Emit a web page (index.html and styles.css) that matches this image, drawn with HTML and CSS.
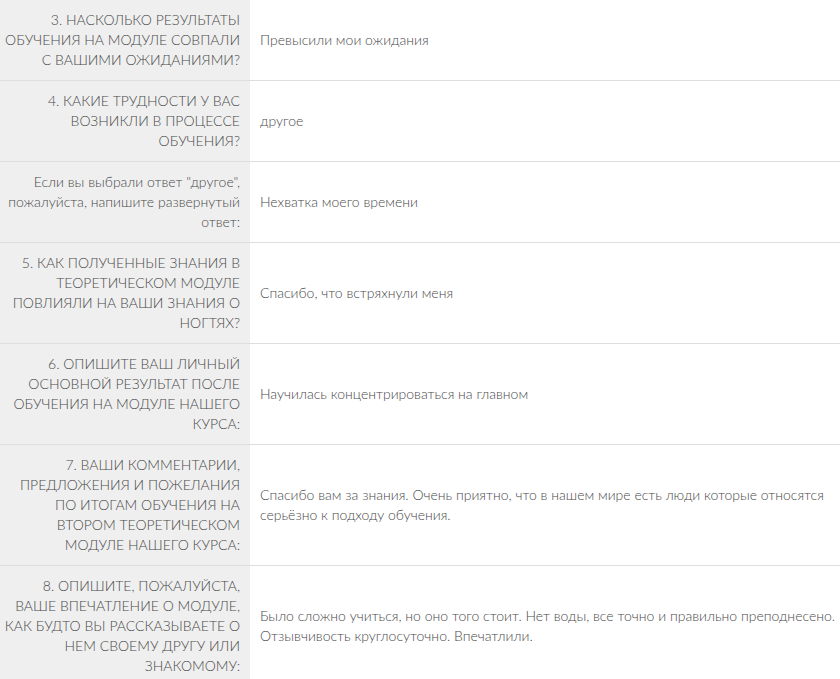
FILE: index.html
```html
<!DOCTYPE html>
<html lang="ru">
<head>
    <meta charset="UTF-8">
    <meta name="viewport" content="width=device-width, initial-scale=1.0">
    <title>Ответы анкеты</title>
    <link rel="stylesheet" href="styles.css">
</head>
<body>
    <div class="answers">
        <div class="answer-row">
            <div class="question">3. НАСКОЛЬКО РЕЗУЛЬТАТЫ<br>ОБУЧЕНИЯ НА МОДУЛЕ СОВПАЛИ<br>С ВАШИМИ ОЖИДАНИЯМИ?</div>
            <div class="reply">Превысили мои ожидания</div>
        </div>
        <div class="answer-row">
            <div class="question">4. КАКИЕ ТРУДНОСТИ У ВАС<br>ВОЗНИКЛИ В ПРОЦЕССЕ<br>ОБУЧЕНИЯ?</div>
            <div class="reply">другое</div>
        </div>
        <div class="answer-row">
            <div class="question">Если вы выбрали ответ "другое",<br>пожалуйста, напишите развернутый<br>ответ:</div>
            <div class="reply">Нехватка моего времени</div>
        </div>
        <div class="answer-row">
            <div class="question">5. КАК ПОЛУЧЕННЫЕ ЗНАНИЯ В<br>ТЕОРЕТИЧЕСКОМ МОДУЛЕ<br>ПОВЛИЯЛИ НА ВАШИ ЗНАНИЯ О<br>НОГТЯХ?</div>
            <div class="reply">Спасибо, что встряхнули меня</div>
        </div>
        <div class="answer-row">
            <div class="question">6. ОПИШИТЕ ВАШ ЛИЧНЫЙ<br>ОСНОВНОЙ РЕЗУЛЬТАТ ПОСЛЕ<br>ОБУЧЕНИЯ НА МОДУЛЕ НАШЕГО<br>КУРСА:</div>
            <div class="reply">Научилась концентрироваться на главном</div>
        </div>
        <div class="answer-row">
            <div class="question">7. ВАШИ КОММЕНТАРИИ,<br>ПРЕДЛОЖЕНИЯ И ПОЖЕЛАНИЯ<br>ПО ИТОГАМ ОБУЧЕНИЯ НА<br>ВТОРОМ ТЕОРЕТИЧЕСКОМ<br>МОДУЛЕ НАШЕГО КУРСА:</div>
            <div class="reply">Спасибо вам за знания. Очень приятно, что в нашем мире есть люди которые относятся серьёзно к подходу обучения.</div>
        </div>
        <div class="answer-row">
            <div class="question">8. ОПИШИТЕ, ПОЖАЛУЙСТА,<br>ВАШЕ ВПЕЧАТЛЕНИЕ О МОДУЛЕ,<br>КАК БУДТО ВЫ РАССКАЗЫВАЕТЕ О<br>НЕМ СВОЕМУ ДРУГУ ИЛИ<br>ЗНАКОМОМУ:</div>
            <div class="reply">Было сложно учиться, но оно того стоит. Нет воды, все точно и правильно преподнесено. Отзывчивость круглосуточно. Впечатлили.</div>
        </div>
    </div>
</body>
</html>
```

FILE: styles.css
```css
body {
    margin: 0;
    background: #fff;
    font-family: "Lato", "Open Sans", sans-serif;
    font-weight: 300;
    font-size: 14px;
    line-height: 20px;
    color: #4a4a4a;
}

.answers {
    width: 840px;
}

.answer-row {
    display: grid;
    grid-template-columns: 250px 1fr;
    border-bottom: 1px solid #dedede;
}

.question {
    background: #efefef;
    text-align: right;
    padding: 10px 10px 10px 0;
}

.reply {
    align-self: center;
    padding: 10px 4px 10px 10px;
}
```
